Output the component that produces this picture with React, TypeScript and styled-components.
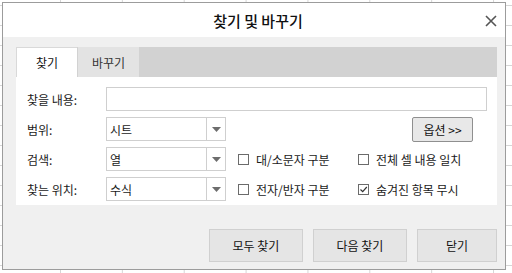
import React from 'react';
import styled, { createGlobalStyle } from 'styled-components';

const font = `"Noto Sans CJK KR", "Noto Sans", sans-serif`;

const Global = createGlobalStyle`
    html, body {
        margin: 0;
        padding: 0;
        background: #fff;
    }
    body {
        font-family: ${font};
        color: #1a1a1a;
    }
`;

const Styles = {
    Sheet: styled.div`
        width: 512px;
        height: 273px;
        box-sizing: border-box;
        padding: 2px 0 0 2px;
        background-color: #fff;
        background-image:
            linear-gradient(to right, #d6d6d6 1px, transparent 1px),
            linear-gradient(to bottom, #d6d6d6 1px, transparent 1px);
        background-size: 61.86px 100%, 100% 20px;
        background-position: 60px 0, 0 5px;
    `,

    Dialog: styled.div`
        width: 504px;
        height: 268px;
        box-sizing: border-box;
        border: 1px solid #9c9c9c;
        background: #f0f0f0;
        display: flex;
        flex-direction: column;
    `,

    TitleBar: styled.div`
        height: 34px;
        background: #fff;
        display: flex;
        align-items: center;
        justify-content: center;
        position: relative;
    `,

    Title: styled.h1`
        margin: 0 0 0 8px;
        font-size: 15px;
        font-weight: 500;
        color: #111;
        letter-spacing: 0;
    `,

    Close: styled.button`
        position: absolute;
        right: 7px;
        top: 11px;
        width: 14px;
        height: 14px;
        padding: 0;
        border: 0;
        background: none;
        display: flex;
        align-items: center;
        justify-content: center;
    `,

    Body: styled.div`
        flex: 1;
        display: flex;
        flex-direction: column;
        padding: 10px 8px 7px 13px;
    `,

    TabStrip: styled.div`
        height: 30px;
        background: #d2d2d2;
        display: flex;
        gap: 1px;
    `,

    Tab: styled.div<{ $active?: boolean }>`
        width: 61px;
        box-sizing: border-box;
        display: flex;
        align-items: center;
        justify-content: center;
        font-size: 12px;
        background: ${p => (p.$active ? '#fff' : '#e3e3e3')};
        border-left: ${p => (p.$active ? '1px solid #d9d9d9' : 'none')};
        border-top: ${p => (p.$active ? '1px solid #d9d9d9' : 'none')};
        color: ${p => (p.$active ? '#111' : '#333')};
    `,

    Panel: styled.div`
        background: #fff;
        padding: 10px 10px 4px 11px;
        display: grid;
        grid-template-columns: 79px 120px 12px 120px 1fr;
        grid-auto-rows: 24px;
        row-gap: 6px;
        align-items: center;
    `,

    Label: styled.div`
        font-size: 12px;
        color: #1a1a1a;
    `,

    Input: styled.div`
        grid-column: 2 / -1;
        height: 24px;
        box-sizing: border-box;
        border: 1px solid #cfcfcf;
        background: #fff;
    `,

    Select: styled.div`
        height: 24px;
        box-sizing: border-box;
        border: 1px solid #cfcfcf;
        display: flex;
        align-items: stretch;
        font-size: 12px;
    `,

    SelectValue: styled.div`
        flex: 1;
        display: flex;
        align-items: center;
        padding-left: 3px;
    `,

    Arrow: styled.div`
        width: 18px;
        border-left: 1px solid #cfcfcf;
        display: flex;
        align-items: center;
        justify-content: center;
    `,

    Check: styled.label<{ $col: number }>`
        grid-column: ${p => p.$col};
        display: flex;
        align-items: center;
        gap: 7px;
        font-size: 12px;
        white-space: nowrap;
    `,

    Box: styled.span`
        width: 11px;
        height: 11px;
        box-sizing: border-box;
        border: 1px solid #6b6b6b;
        background: #fff;
        display: flex;
        align-items: center;
        justify-content: center;
    `,

    OptionButton: styled.button`
        grid-column: 5;
        justify-self: end;
        margin-right: 14px;
        width: 61px;
        height: 25px;
        box-sizing: border-box;
        border: 1px solid #8f8f8f;
        border-radius: 2px;
        background: #e8e8e8;
        font-family: ${font};
        font-size: 12px;
        color: #111;
        padding: 0;
    `,

    Footer: styled.div`
        margin-top: auto;
        display: flex;
        justify-content: flex-end;
        gap: 10px;
    `,

    Button: styled.button<{ $w: number }>`
        width: ${p => p.$w}px;
        height: 33px;
        box-sizing: border-box;
        border: 1px solid #d0d0d0;
        background: #e5e5e5;
        font-family: ${font};
        font-size: 12px;
        color: #111;
        padding: 0;
    `,
};

const Caret = () => (
    <svg width="9" height="5" viewBox="0 0 9 5">
        <path d="M0 0 H9 L4.5 5 Z" fill="#6d6d6d" />
    </svg>
);

const Dropdown: React.FC<{ value: string }> = ({ value }) => (
    <Styles.Select>
        <Styles.SelectValue>{value}</Styles.SelectValue>
        <Styles.Arrow>
            <Caret />
        </Styles.Arrow>
    </Styles.Select>
);

const CheckOption: React.FC<{ col: number; checked?: boolean; text: string }> = ({ col, checked, text }) => (
    <Styles.Check $col={col}>
        <Styles.Box>
            {checked && (
                <svg width="9" height="9" viewBox="0 0 9 9">
                    <path d="M1.5 4.5 L3.7 6.7 L7.8 2" fill="none" stroke="#333" strokeWidth="1.2" />
                </svg>
            )}
        </Styles.Box>
        {text}
    </Styles.Check>
);

export default function App() {
    return (
        <>
            <Global />
            <Styles.Sheet>
                <Styles.Dialog>
                    <Styles.TitleBar>
                        <Styles.Title>찾기 및 바꾸기</Styles.Title>
                        <Styles.Close aria-label="닫기">
                            <svg width="12" height="12" viewBox="0 0 12 12">
                                <path d="M1 1 L11 11 M11 1 L1 11" stroke="#555" strokeWidth="1.6" />
                            </svg>
                        </Styles.Close>
                    </Styles.TitleBar>
                    <Styles.Body>
                        <Styles.TabStrip>
                            <Styles.Tab $active>찾기</Styles.Tab>
                            <Styles.Tab>바꾸기</Styles.Tab>
                        </Styles.TabStrip>
                        <Styles.Panel>
                            <Styles.Label>찾을 내용:</Styles.Label>
                            <Styles.Input />

                            <Styles.Label>범위:</Styles.Label>
                            <Dropdown value="시트" />
                            <Styles.OptionButton>옵션 &gt;&gt;</Styles.OptionButton>

                            <Styles.Label>검색:</Styles.Label>
                            <Dropdown value="열" />
                            <CheckOption col={4} text="대/소문자 구분" />
                            <CheckOption col={5} text="전체 셀 내용 일치" />

                            <Styles.Label>찾는 위치:</Styles.Label>
                            <Dropdown value="수식" />
                            <CheckOption col={4} text="전자/반자 구분" />
                            <CheckOption col={5} checked text="숨겨진 항목 무시" />
                        </Styles.Panel>
                        <Styles.Footer>
                            <Styles.Button $w={94}>모두 찾기</Styles.Button>
                            <Styles.Button $w={94}>다음 찾기</Styles.Button>
                            <Styles.Button $w={80}>닫기</Styles.Button>
                        </Styles.Footer>
                    </Styles.Body>
                </Styles.Dialog>
            </Styles.Sheet>
        </>
    );
}
